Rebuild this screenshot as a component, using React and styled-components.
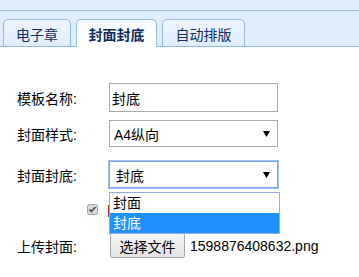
import styled, { createGlobalStyle } from "styled-components";

const Global = createGlobalStyle`
  body {
    margin: 0;
    background: #fff;
    font-family: "Liberation Sans", "Noto Sans CJK SC", sans-serif;
    font-size: 14px;
    color: #000;
  }
`;

const Page = styled.div`
  width: 359px;
  height: 277px;
  overflow: hidden;
`;

const TopBand = styled.div`
  height: 10px;
  background: #e0ecff;
  border-bottom: 1px solid #95b8e7;
`;

const TabsHeader = styled.div`
  height: 35px;
  background: #e0ecff;
  border-bottom: 1px solid #95b8e7;
  display: flex;
  align-items: flex-end;
  gap: 5px;
  padding-left: 3px;
`;

const Tab = styled.div`
  height: 28px;
  margin-bottom: -1px;
  width: ${(p) => p.$w}px;
  box-sizing: border-box;
  border: 1px solid #95b8e7;
  border-bottom: ${(p) => (p.$active ? "1px solid #fff" : "1px solid #95b8e7")};
  border-radius: 5px 5px 0 0;
  background: ${(p) =>
    p.$active ? "linear-gradient(#f4f8ff 0, #ffffff 100%)" : "linear-gradient(#eff5ff 0, #e0ecff 100%)"};
  color: #0e2d5f;
  font-weight: ${(p) => (p.$active ? "bold" : "normal")};
  display: flex;
  align-items: center;
  justify-content: center;
  padding-top: 2px;
`;

const Form = styled.div`
  padding-top: 36px;
`;

const Row = styled.div`
  display: flex;
  align-items: center;
  height: ${(p) => p.$h}px;
  margin-top: ${(p) => p.$mt || 0}px;
`;

const Label = styled.div`
  width: 109px;
  padding-left: 17px;
  box-sizing: border-box;
  flex: none;
`;

const TextBox = styled.div`
  width: 169px;
  height: 29px;
  box-sizing: border-box;
  border: 1px solid #a9a9a9;
  display: flex;
  align-items: center;
  padding-left: 2px;
`;

const SelectWrap = styled.div`
  position: relative;
`;

const Select = styled.div`
  width: 169px;
  height: 27px;
  box-sizing: border-box;
  border: 1px solid ${(p) => (p.$focus ? "#7aa7e8" : "#a9a9a9")};
  box-shadow: ${(p) => (p.$focus ? "0 0 0 1px #9bbff0" : "none")};
  display: flex;
  align-items: center;
  justify-content: space-between;
  padding: 0 7px 0 ${(p) => (p.$focus ? 6 : 4)}px;
`;

const Arrow = styled.svg`
  width: 7px;
  height: 6px;
`;

const DropList = styled.div`
  position: absolute;
  top: 31px;
  left: 0;
  width: 171px;
  box-sizing: border-box;
  border: 1px solid #8fb0df;
  background: #fff;
  z-index: 2;
`;

const Option = styled.div`
  height: 20px;
  line-height: 20px;
  padding-left: 3px;
  background: ${(p) => (p.$sel ? "#1e90ff" : "#fff")};
  color: ${(p) => (p.$sel ? "#fff" : "#000")};
`;

const CheckRow = styled(Row)`
  padding-left: 87px;
  gap: 8px;
`;

const CheckBox = styled.svg`
  width: 11px;
  height: 11px;
  flex: none;
`;

const FileButton = styled.div`
  width: 75px;
  height: 25px;
  box-sizing: border-box;
  margin-left: 1px;
  border: 1px solid #a9a9a9;
  border-radius: 2px;
  background: linear-gradient(#f6f6f6, #e4e4e4);
  display: flex;
  align-items: center;
  justify-content: center;
`;

const FileName = styled.span`
  margin-left: 5px;
`;

const ArrowIcon = () => (
  <Arrow viewBox="0 0 7 6">
    <path d="M0 0h7L3.5 6z" fill="#000" />
  </Arrow>
);

export default function App() {
  return (
    <Page>
      <Global />
      <TopBand />
      <TabsHeader>
        <Tab $w={68}>电子章</Tab>
        <Tab $w={81} $active>
          封面封底
        </Tab>
        <Tab $w={83}>自动排版</Tab>
      </TabsHeader>
      <Form>
        <Row $h={29}>
          <Label>模板名称:</Label>
          <TextBox>封底</TextBox>
        </Row>
        <Row $h={27} $mt={8}>
          <Label>封面样式:</Label>
          <Select>
            A4纵向
            <ArrowIcon />
          </Select>
        </Row>
        <Row $h={27} $mt={14}>
          <Label>封面封底:</Label>
          <SelectWrap>
            <Select $focus>
              封底
              <ArrowIcon />
            </Select>
            <DropList>
              <Option>封面</Option>
              <Option $sel>封底</Option>
            </DropList>
          </SelectWrap>
        </Row>
        <CheckRow $h={20} $mt={11}>
          <CheckBox viewBox="0 0 11 11">
            <rect x="0.5" y="0.5" width="10" height="10" rx="2" fill="#dcdcdc" stroke="#a0a0a0" />
            <path d="M2.5 5.5l2 2 4-4.5" fill="none" stroke="#505050" strokeWidth="1.8" />
          </CheckBox>
          <span>自动生成</span>
        </CheckRow>
        <Row $h={25} $mt={14}>
          <Label>上传封面:</Label>
          <FileButton>选择文件</FileButton>
          <FileName>1598876408632.png</FileName>
        </Row>
      </Form>
    </Page>
  );
}
